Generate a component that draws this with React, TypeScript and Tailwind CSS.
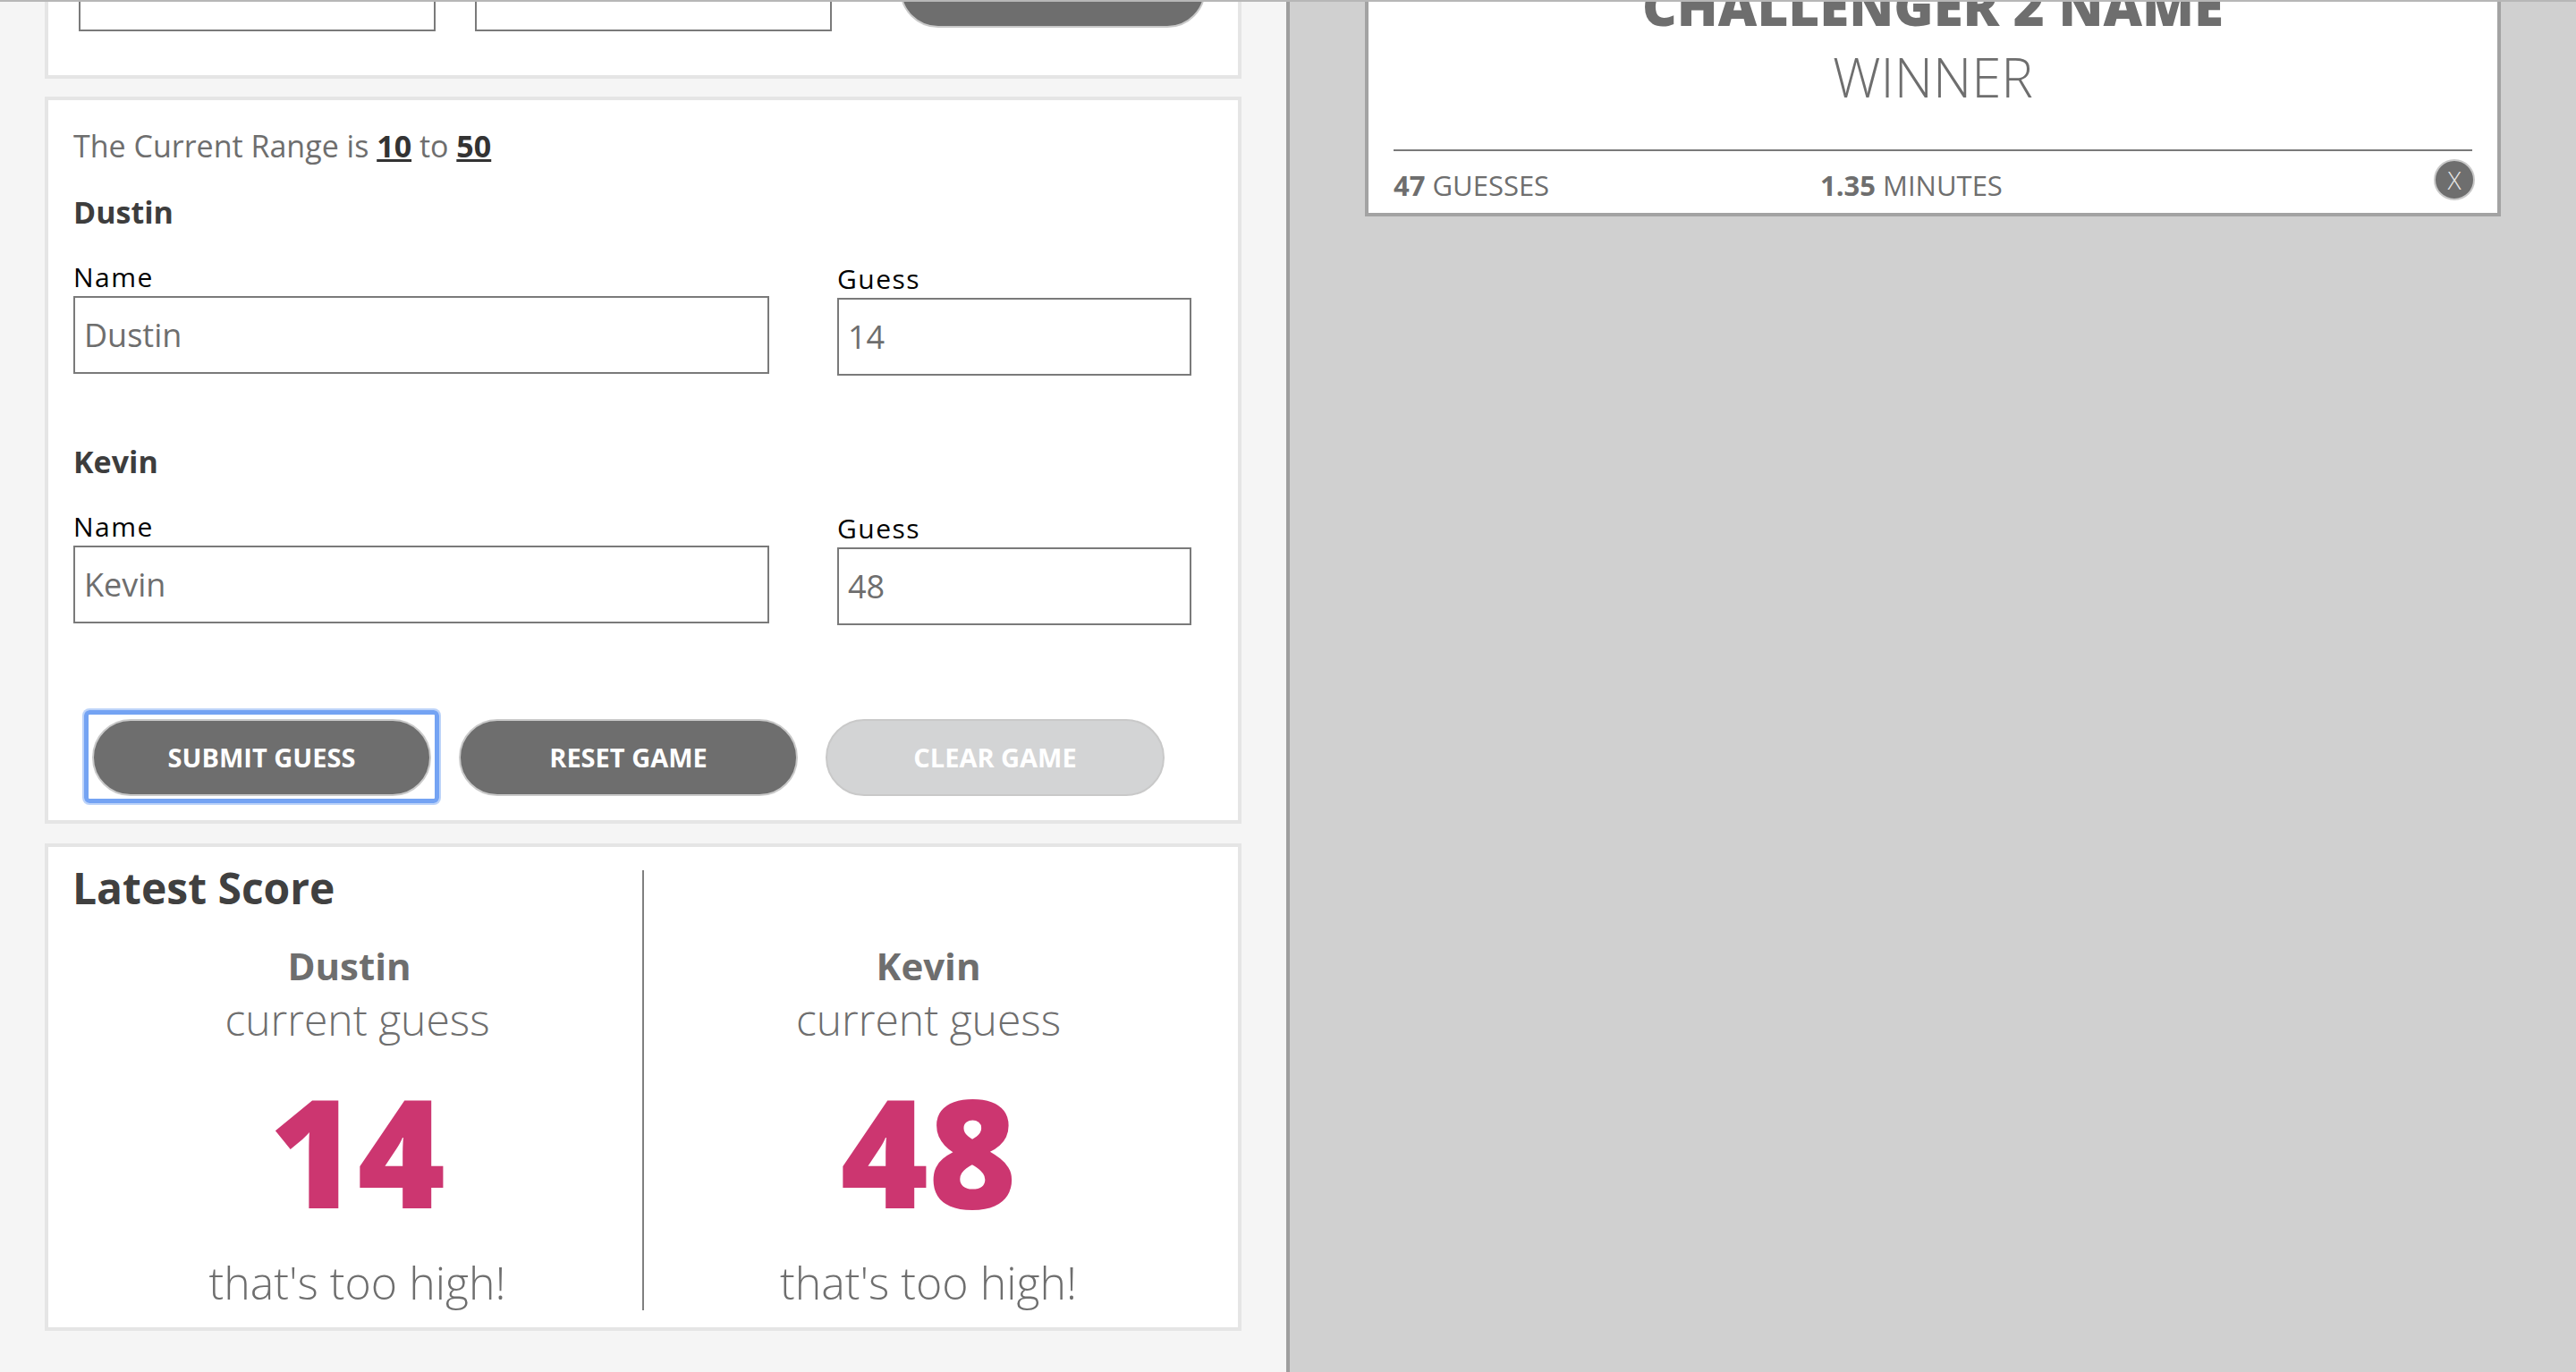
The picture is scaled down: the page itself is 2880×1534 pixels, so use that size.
import React from "react";

const inputBox =
  "h-[87px] w-full border-2 border-[#7a7a7a] bg-white pl-[10px] text-[36px] text-[#6e6e6e] outline-none";

function PlayerFields({ label, name, guess }: { label: string; name: string; guess: string }) {
  return (
    <div>
      <h3 className="text-[34px] font-bold leading-[40px] text-[#3d3d3d]">{label}</h3>
      <div className="mt-[35px] flex items-start gap-[76px]">
        <label className="flex w-[778px] flex-col gap-[3px]">
          <span className="text-[30px] leading-[36px] tracking-[1.5px] text-black">Name</span>
          <input readOnly value={name} className={inputBox} />
        </label>
        <label className="mt-[2px] flex w-[396px] flex-col gap-[3px]">
          <span className="text-[30px] leading-[36px] tracking-[1.5px] text-black">Guess</span>
          <input readOnly value={guess} className={inputBox} />
        </label>
      </div>
    </div>
  );
}

function PillButton({ children, muted, focused }: { children: React.ReactNode; muted?: boolean; focused?: boolean }) {
  return (
    <div className="relative">
      {focused && (
        <span className="pointer-events-none absolute -top-[10px] -right-[9px] -bottom-[8px] -left-[9px] rounded-[6px] border-[5px] border-[#74a3f3] shadow-[0_0_0_2px_#bcd3f9]" />
      )}
      <button
        className={`relative h-[86px] w-[379px] rounded-full border-2 border-[#c9c9c9] text-[29px] font-bold uppercase text-white ${
          muted ? "bg-[#d3d4d5]" : "bg-[#6e6e6e]"
        }`}
      >
        {children}
      </button>
    </div>
  );
}

function ScoreColumn({ name, guess, note, nameShift }: { name: string; guess: number; note: string; nameShift?: boolean }) {
  return (
    <div className="flex flex-col items-center text-center">
      <div className={`text-[42px] font-bold leading-[48px] text-[#6e6e6e] ${nameShift ? "pr-[18px]" : ""}`}>{name}</div>
      <div className="mt-[8px] text-[48px] font-light leading-[56px] text-[#6e6e6e]">current guess</div>
      <div className="mt-[34px] text-[168px] font-extrabold leading-[168px] text-[#cc3670]">{guess}</div>
      <div className="mt-[35px] text-[50px] font-light leading-[58px] text-[#6e6e6e]">{note}</div>
    </div>
  );
}

export default function App() {
  return (
    <div className="relative flex h-[1534px] w-[2880px] overflow-hidden font-[family-name:Open_Sans,sans-serif]">
      <span className="absolute top-0 left-0 right-0 h-[2px] bg-[#b7b7b7]" />

      {/* left: game controls */}
      <div className="flex w-[1438px] flex-col bg-[#f5f5f5] px-[50px]">
        <section className="-mt-[84px] border-4 border-[#e5e5e5] bg-white pt-[28px] pb-[49px] pl-[34px]">
          <div className="flex items-start">
            <input readOnly value="" className={`${inputBox} !w-[399px]`} />
            <input readOnly value="" className={`${inputBox} ml-[44px] !w-[399px]`} />
            <button className="-mt-[3px] ml-[76px] h-[86px] w-[342px] rounded-full border-2 border-[#c9c9c9] bg-[#6e6e6e] text-[29px] font-bold text-white">
              SET RANGE
            </button>
          </div>
        </section>

        <section className="mt-[20px] border-4 border-[#e5e5e5] bg-white pt-[28px] pb-[27px] pl-[28px]">
          <p className="text-[34px] leading-[46px] text-[#6e6e6e]">
            The Current Range is{" "}
            <span className="font-bold text-[#333] underline">10</span> to{" "}
            <span className="font-bold text-[#333] underline">50</span>
          </p>
          <div className="mt-[31px]">
            <PlayerFields label="Dustin" name="Dustin" guess="14" />
          </div>
          <div className="mt-[76px]">
            <PlayerFields label="Kevin" name="Kevin" guess="48" />
          </div>
          <div className="mt-[105px] ml-[21px] flex gap-[31px]">
            <PillButton focused>Submit Guess</PillButton>
            <PillButton>Reset Game</PillButton>
            <PillButton muted>Clear Game</PillButton>
          </div>
        </section>

        <section className="mt-[22px] flex border-4 border-[#e5e5e5] bg-white pt-[26px] pb-[19px] pl-[27px]">
          <div className="w-[639px] border-r-2 border-[#808080] pb-[2px]">
            <h2 className="text-[48px] font-bold leading-[40px] text-[#404040]">Latest Score</h2>
            <div className="mt-[43px]">
              <ScoreColumn name="Dustin" guess={14} note="that's too high!" nameShift />
            </div>
          </div>
          <div className="w-[636px] pt-[83px]">
            <ScoreColumn name="Kevin" guess={48} note="that's too high!" />
          </div>
        </section>
      </div>

      <div className="w-[4px] bg-[#9e9e9e]" />

      {/* right: winner cards */}
      <div className="flex-1 bg-[#d0d0d0] pl-[84px]">
        <article className="-mt-[60px] w-[1270px] border-4 border-[#a3a3a3] bg-white px-[28px] pt-[24px] pb-[12px]">
          <h2 className="text-center text-[60px] font-extrabold leading-[76px] text-[#6e6e6e]">CHALLENGER 2 NAME</h2>
          <div className="mt-[7px] text-center text-[60px] font-light leading-[70px] text-[#6e6e6e]">WINNER</div>
          <div className="mt-[46px] border-t-2 border-[#7a7a7a] pt-[9px]">
            <div className="flex items-start">
              <div className="mt-[10px] w-[477px] text-[31px] leading-[38px] text-[#6e6e6e]">
                <span className="font-bold">47</span> <span className="font-normal">GUESSES</span>
              </div>
              <div className="mt-[10px] text-[31px] leading-[38px] text-[#6e6e6e]">
                <span className="font-bold">1.35</span> <span className="font-normal">MINUTES</span>
              </div>
              <button className="-mr-[3px] ml-auto flex h-[46px] w-[46px] items-center justify-center rounded-full border-2 border-[#c8c8c8] bg-[#6e6e6e] text-[28px] font-light leading-none text-[#e6e6e6]">
                X
              </button>
            </div>
          </div>
        </article>
      </div>
    </div>
  );
}
